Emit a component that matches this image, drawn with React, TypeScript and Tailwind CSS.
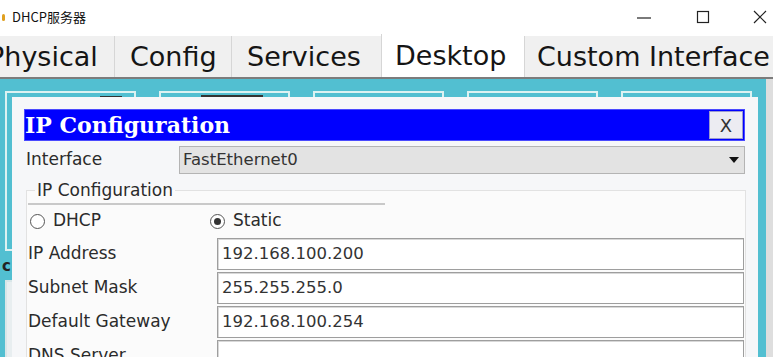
import React from "react";

const tabs = [
    { label: "Physical", cls: "ml-[-24px] w-[138px] pl-[11px]" },
    { label: "Config", cls: "w-[117px] pl-[15px]" },
    { label: "Services", cls: "w-[150px] pl-[15px]" },
    { label: "Desktop", cls: "w-[143px] pl-[13px]", active: true },
    { label: "Custom Interface", cls: "flex-1 pl-[12px]" },
];

const rows = [
    { label: "IP Address", value: "192.168.100.200" },
    { label: "Subnet Mask", value: "255.255.255.0" },
    { label: "Default Gateway", value: "192.168.100.254" },
    { label: "DNS Server", value: "" },
];

function Radio({ checked, label, cls }: { checked?: boolean; label: string; cls: string }) {
    return (
        <div className={`flex items-center ${cls}`}>
            <span className="flex h-[15px] w-[15px] items-center justify-center rounded-full border border-[#555] bg-white">
                {checked && <span className="h-[7px] w-[7px] rounded-full bg-[#333]"></span>}
            </span>
            <span className="ml-[8px] text-[17px] text-[#2b2b2b]">{label}</span>
        </div>
    );
}

export default function App() {
    return (
        <div className="flex h-[357px] w-[773px] flex-col overflow-hidden bg-white font-['DejaVu_Sans',sans-serif]">
            {/* window title */}
            <div className="flex h-[34px] shrink-0 items-center">
                <span className="ml-[2px] h-[7px] w-[3px] rounded-sm bg-[#e0a020]"></span>
                <span className="ml-[7px] font-['Noto_Sans_CJK_SC',sans-serif] text-[13px] text-[#111]">DHCP服务器</span>
                <div className="ml-auto flex items-center">
                    <svg width="16" height="16" viewBox="0 0 16 16" className="mr-[44px]">
                        <line x1="1" y1="9" x2="15" y2="9" stroke="#222" strokeWidth="1.2" />
                    </svg>
                    <svg width="14" height="14" viewBox="0 0 14 14" className="mr-[43px]">
                        <rect x="1.5" y="1.5" width="11" height="11" fill="none" stroke="#222" strokeWidth="1.2" />
                    </svg>
                    <svg width="14" height="14" viewBox="0 0 14 14" className="mr-[6px]">
                        <path d="M1 1 L13 13 M13 1 L1 13" stroke="#222" strokeWidth="1.2" />
                    </svg>
                </div>
            </div>

            {/* tabs */}
            <div className="flex h-[45px] shrink-0 items-end border-b-2 border-[#7c7c7c]">
                {tabs.map((t) => (
                    <div
                        key={t.label}
                        className={`flex shrink-0 items-center whitespace-nowrap border-l border-[#d6d6d6] pt-[2px] text-[27px] text-[#151515] ${t.cls} ${
                            t.active ? "h-[43px] bg-white" : "h-[41px] bg-[#f0f0f0]"
                        }`}
                    >
                        {t.label}
                    </div>
                ))}
            </div>

            {/* desktop */}
            <div className="flex min-h-0 flex-1">
                <div className="relative flex-1 overflow-hidden bg-[#52bfd1]">
                    <div className="flex gap-[23px] pl-[5px] pt-[12px]">
                        {[0, 1, 2, 3, 4].map((i) => (
                            <div key={i} className="relative h-[160px] w-[131px] border-2 border-[#dcf2f2]">
                                {i === 0 && <div className="absolute left-[93px] top-[3px] h-[2px] w-[22px] bg-[#333]"></div>}
                                {i === 1 && <div className="absolute left-[40px] top-[2px] h-[2px] w-[62px] bg-[#333]"></div>}
                                {i === 3 && <div className="absolute left-[55px] top-[4px] h-[3px] w-[72px] bg-[#2a3a40]"></div>}
                            </div>
                        ))}
                    </div>
                    <div className="ml-[2px] mt-[8px] text-[15px] font-bold leading-none text-[#222]">c</div>
                    <div className="ml-[5px] mt-[6px] h-[80px] w-[131px] border-2 border-[#d8e6e8] bg-[#e8eef0]"></div>

                    {/* IP Configuration window */}
                    <div className="absolute bottom-0 left-[12px] top-[18px] w-[746px] bg-[#f6f7f9] pl-[12px] pr-[13px] pt-[12px]">
                        <div className="flex h-[32px] items-center border border-[#4a4aff] bg-[#0000ff]">
                            <span className="pt-[1px] font-['DejaVu_Serif',serif] text-[22px] font-bold text-white">IP Configuration</span>
                            <span className="ml-auto mr-[1px] flex h-[28px] w-[34px] items-center justify-center border border-[#9a9ad0] bg-[#ececf2] text-[18px] text-[#333]">
                                X
                            </span>
                        </div>

                        <div className="mt-[5px] flex h-[28px] items-center">
                            <span className="w-[155px] pl-[2px] text-[17px] text-[#2b2b2b]">Interface</span>
                            <div className="flex h-full flex-1 items-center border border-[#b4b4b4] bg-[#e3e3e3] pl-[3px] pr-[5px]">
                                <span className="text-[16.5px] text-[#333]">FastEthernet0</span>
                                <svg width="10" height="6" viewBox="0 0 10 6" className="ml-auto">
                                    <path d="M0 0 L10 0 L5 6 Z" fill="#111" />
                                </svg>
                            </div>
                        </div>

                        <fieldset className="ml-[2px] mr-[-1px] mt-[6px] border border-[#e2e2e2] bg-[#fbfbfb] pb-[20px]">
                            <legend className="ml-[8px] px-[2px] text-[17px] leading-[20px] text-[#2b2b2b]">IP Configuration</legend>
                            <div className="ml-[1px] mt-[3px] h-[2px] w-[357px] bg-[#c9c9c9]"></div>
                            <div className="mt-[3px] flex h-[26px] items-center">
                                <Radio label="DHCP" cls="ml-[3px] w-[180px]" />
                                <Radio label="Static" checked cls="" />
                            </div>
                            <div className="mt-[4px] flex flex-col gap-[2px]">
                                {rows.map((r) => (
                                    <div key={r.label} className="flex h-[32px] items-center">
                                        <span className="w-[190px] pl-[1px] text-[17px] text-[#2b2b2b]">{r.label}</span>
                                        <div className="flex h-full w-[527px] items-center border border-[#9e9e9e] bg-white pl-[4px] shadow-[inset_1px_1px_0_#d8d8d8]">
                                            <span className="text-[16.5px] text-[#333]">{r.value}</span>
                                        </div>
                                    </div>
                                ))}
                            </div>
                        </fieldset>
                    </div>
                </div>
                <div className="w-[7px] bg-[#dedede]"></div>
            </div>
        </div>
    );
}
